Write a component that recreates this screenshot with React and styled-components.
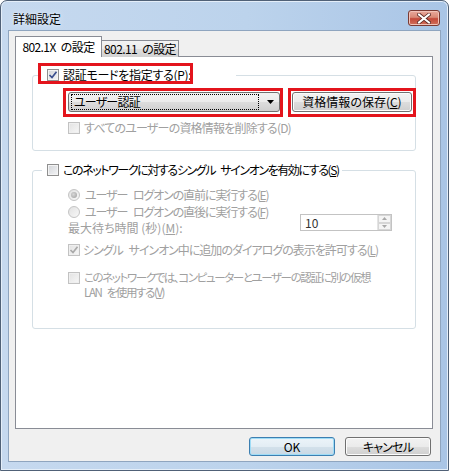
import React from "react";
import styled, { createGlobalStyle } from "styled-components";

const GlobalStyle = createGlobalStyle`
  html, body { margin: 0; padding: 0; background: #fff; }
  body {
    font-family: "Noto Sans CJK JP", "Noto Sans", sans-serif;
    font-size: 12px;
    color: #000;
    font-feature-settings: "palt";
  }
`;

const Window = styled.div`
  width: 449px;
  height: 471px;
  box-sizing: border-box;
  border: 1px solid #506177;
  border-radius: 7px 7px 0 0;
  background: linear-gradient(to right, #c6d9ef 0%, #bcd3ec 55%, #a9c5e6 100%);
  box-shadow: inset 0 0 0 1px #e4eef9;
  display: flex;
  flex-direction: column;
  overflow: hidden;
`;

const TitleBar = styled.div`
  height: 29px;
  display: flex;
  align-items: flex-start;
  padding: 0 8px 0 12px;
`;

const Title = styled.div`
  margin-top: 11px;
  line-height: 14px;
  flex: 1;
  text-shadow: 0 0 6px #e8f1fb, 0 0 2px #e8f1fb;
`;

const CloseButton = styled.div`
  margin-top: 9px;
  width: 32px;
  height: 16px;
  box-sizing: border-box;
  border: 1px solid #7a3a33;
  border-radius: 3px;
  background: linear-gradient(#e9a99c 0%, #d98977 45%, #c4493a 55%, #d0705c 100%);
  box-shadow: inset 0 0 0 1px #f1c2b8;
  display: flex;
  align-items: center;
  justify-content: center;
`;

const Client = styled.div`
  margin-left: 7px;
  width: 433px;
  height: 432px;
  box-sizing: border-box;
  background: #f0f0f0;
  border: 1px solid #8fa5bf;
  padding: 5px 8px 0 6px;
  display: flex;
  flex-direction: column;
`;

const TabStrip = styled.div`
  display: flex;
  align-items: flex-end;
  height: 21px;
  margin-bottom: -1px;
`;

const Tab = styled.div`
  box-sizing: border-box;
  width: ${(p) => p.$width}px;
  height: ${(p) => (p.$active ? 21 : 17)}px;
  padding-top: ${(p) => (p.$active ? 3 : 1)}px;
  line-height: 14px;
  letter-spacing: -0.6px;
  word-spacing: 3px;
  text-align: center;
  white-space: nowrap;
  border: 1px solid #898c95;
  border-bottom: none;
  border-left: ${(p) => (p.$active ? "1px solid #898c95" : "none")};
  background: ${(p) =>
    p.$active ? "#fff" : "linear-gradient(#f3f3f3 0%, #ebebeb 50%, #dedede 51%, #d2d2d2 100%)"};
  position: ${(p) => (p.$active ? "relative" : "static")};
  z-index: ${(p) => (p.$active ? 1 : 0)};
`;

const Panel = styled.div`
  width: 418px;
  height: 373px;
  box-sizing: border-box;
  border: 1px solid #898c95;
  background: #fff;
  padding: 18px 16px 0;
`;

const Group = styled.div`
  width: 384px;
  height: ${(p) => p.$height}px;
  margin-top: ${(p) => p.$top || 0}px;
  box-sizing: border-box;
  border: 1px solid #d5dfe5;
  border-radius: 3px;
  display: flex;
  flex-direction: column;
`;

const Legend = styled.div`
  display: flex;
  align-items: center;
  height: 14px;
  margin: -8px 0 0 ${(p) => p.$left}px;
  padding: 0 3px 0 ${(p) => p.$pad}px;
  width: ${(p) => (p.$width ? `${p.$width}px` : "auto")};
  align-self: flex-start;
  box-sizing: border-box;
  background: #fff;
`;

const Mark = styled.div`
  position: relative;
  display: flex;
  align-items: center;
  &::after {
    content: "";
    position: absolute;
    inset: ${(p) => p.$inset};
    border: 3px solid #e3141c;
    pointer-events: none;
  }
`;

const Row = styled.div`
  display: flex;
  align-items: ${(p) => p.$align || "center"};
  height: ${(p) => (p.$height ? `${p.$height}px` : "auto")};
  margin-top: ${(p) => p.$top || 0}px;
  padding: 0 ${(p) => p.$right || 0}px 0 35px;
  gap: ${(p) => p.$gap || 0}px;
`;

const Label = styled.span`
  color: ${(p) => (p.$disabled ? "#a0a0a0" : "#000")};
  font-size: ${(p) => p.$size || 12}px;
  line-height: ${(p) => p.$lh || 14}px;
  letter-spacing: ${(p) => p.$ls || 0}px;
  word-spacing: ${(p) => (p.$ls ? 4 : 0)}px;
  margin-left: ${(p) => (p.$gap === undefined ? 4 : p.$gap)}px;
  margin-top: ${(p) => p.$top || 0}px;
  white-space: nowrap;
`;

const Line = styled.span`
  display: block;
  height: 15px;
  line-height: 15px;
`;

const Box = styled.span`
  flex: none;
  width: 12px;
  height: 12px;
  box-sizing: border-box;
  margin-top: ${(p) => p.$top || 0}px;
  border: 1px solid ${(p) => (p.$disabled ? "#c2c2c2" : "#8f8f8f")};
  background: ${(p) =>
    p.$disabled
      ? "linear-gradient(135deg, #e2e2e2, #f7f7f7)"
      : "linear-gradient(135deg, #d2d4d8, #f4f5f7)"};
  box-shadow: inset 0 0 0 1px ${(p) => (p.$disabled ? "#efefef" : "#f4f4f4")};
  display: flex;
  align-items: center;
  justify-content: center;
`;

const Radio = styled.span`
  flex: none;
  width: 12px;
  height: 12px;
  box-sizing: border-box;
  border-radius: 50%;
  border: 1px solid #c4c4c4;
  background: linear-gradient(135deg, #e1e1e1, #f8f8f8);
  display: flex;
  align-items: center;
  justify-content: center;
  &::after {
    content: "";
    display: ${(p) => (p.$checked ? "block" : "none")};
    width: 6px;
    height: 6px;
    border-radius: 50%;
    background: radial-gradient(circle at 40% 40%, #d8d8d8, #9c9c9c);
  }
`;

const Dropdown = styled.div`
  width: 212px;
  height: 20px;
  box-sizing: border-box;
  border: 1px solid #707070;
  border-radius: 3px;
  background: linear-gradient(#f2f2f2 0%, #ebebeb 50%, #dddddd 51%, #cfcfcf 100%);
  display: flex;
  align-items: center;
  padding: 1px 5px 1px 2px;
`;

const Focus = styled.div`
  flex: 1;
  height: 14px;
  border: 1px dotted #000;
  line-height: 14px;
  letter-spacing: -0.8px;
  padding-left: 2px;
  margin-right: 8px;
`;

const Button = styled.div`
  width: ${(p) => p.$width}px;
  height: ${(p) => p.$height || 20}px;
  box-sizing: border-box;
  border: 1px solid ${(p) => (p.$default ? "#3c7fb1" : "#707070")};
  border-radius: 3px;
  background: ${(p) =>
    p.$default
      ? "linear-gradient(#ecf4f9 0%, #e3edf4 50%, #d3e1eb 51%, #c9d8e4 100%)"
      : "linear-gradient(#f2f2f2 0%, #ebebeb 50%, #dddddd 51%, #cfcfcf 100%)"};
  box-shadow: inset 0 0 0 1px ${(p) => (p.$default ? "#9fdcf6" : "#fcfcfc")};
  display: flex;
  align-items: center;
  justify-content: center;
  line-height: 14px;
  letter-spacing: ${(p) => p.$ls || 0}px;
`;

const Spin = styled.div`
  margin-left: auto;
  width: 92px;
  height: 17px;
  box-sizing: border-box;
  border: 1px solid #c3c3c3;
  background: #fff;
  display: flex;
  color: #333;
`;

const SpinValue = styled.div`
  flex: 1;
  padding-left: 4px;
  line-height: 15px;
`;

const SpinArrows = styled.div`
  width: 13px;
  display: flex;
  flex-direction: column;
  border-left: 1px solid #e4e4e4;
`;

const SpinHalf = styled.div`
  flex: 1;
  background: #f4f4f4;
  border: 1px solid #d6d6d6;
  display: flex;
  align-items: center;
  justify-content: center;
`;

const Footer = styled.div`
  display: flex;
  justify-content: flex-end;
  gap: 10px;
  margin-top: 8px;
  padding-right: 1px;
`;

const Check = ({ color }) => (
  <svg width="10" height="10" viewBox="0 0 10 10">
    <path d="M1.5 5 L4 7.5 L8.5 1.8" fill="none" stroke={color} strokeWidth="1.7" />
  </svg>
);

const Tri = ({ up, color = "#000", w = 7, h = 4 }) => (
  <svg width={w} height={h} viewBox={`0 0 ${w} ${h}`}>
    <path d={up ? `M0 ${h} L${w / 2} 0 L${w} ${h}Z` : `M0 0 L${w} 0 L${w / 2} ${h}Z`} fill={color} />
  </svg>
);

const CloseIcon = () => (
  <svg width="14" height="11" viewBox="0 0 14 11">
    <path d="M2 1.5 L12 9.5 M12 1.5 L2 9.5" stroke="#5b2a25" strokeWidth="3.6" strokeLinecap="square" />
    <path d="M2 1.5 L12 9.5 M12 1.5 L2 9.5" stroke="#fff" strokeWidth="2" strokeLinecap="square" />
  </svg>
);

export default function App() {
  return (
    <>
      <GlobalStyle />
      <Window>
        <TitleBar>
          <Title>詳細設定</Title>
          <CloseButton>
            <CloseIcon />
          </CloseButton>
        </TitleBar>
        <Client>
          <TabStrip>
            <Tab $active $width={87}>802.1X の設定</Tab>
            <Tab $width={77}>802.11 の設定</Tab>
          </TabStrip>
          <Panel>
            <Group $height={76}>
              <Legend $left={8} $pad={6} $width={195}>
                <Mark $inset="-5px -2px -2px -9px">
                  <Box>
                    <Check color="#3b4f8e" />
                  </Box>
                  <Label $ls={-0.3}>認証モードを指定する(P):</Label>
                </Mark>
              </Legend>
              <Row $top={10} $gap={12}>
                <Mark $inset="-4px -3px -5px -5px">
                  <Dropdown>
                    <Focus>ユーザー認証</Focus>
                    <Tri />
                  </Dropdown>
                </Mark>
                <Mark $inset="-4px -4px -5px -4px">
                  <Button $width={120}>資格情報の保存(<u>C</u>)</Button>
                </Mark>
              </Row>
              <Row $top={9} $height={14}>
                <Box $disabled />
                <Label $disabled $ls={-0.8}>すべてのユーザーの資格情報を削除する(D)</Label>
              </Row>
            </Group>

            <Group $height={159} $top={19}>
              <Legend $left={9} $pad={5}>
                <Box />
                <Label $ls={-1.4}>このネットワークに対するシングル サインオンを有効にする(<u>S</u>)</Label>
              </Legend>
              <Row $top={9} $height={17}>
                <Radio $checked />
                <Label $disabled $gap={5} $ls={-1.1}>ユーザー ログオンの直前に実行する(<u>E</u>)</Label>
              </Row>
              <Row $height={17}>
                <Radio />
                <Label $disabled $gap={5} $ls={-1.1}>ユーザー ログオンの直後に実行する(<u>F</u>)</Label>
              </Row>
              <Row $top={-6} $height={23} $align="flex-start" $right={23}>
                <Label $disabled $gap={0} $top={7}>最大待ち時間 (秒)(<u>M</u>):</Label>
                <Spin>
                  <SpinValue>10</SpinValue>
                  <SpinArrows>
                    <SpinHalf><Tri up color="#a8a8a8" w={5} h={3} /></SpinHalf>
                    <SpinHalf><Tri color="#a8a8a8" w={5} h={3} /></SpinHalf>
                  </SpinArrows>
                </Spin>
              </Row>
              <Row $top={4} $height={17}>
                <Box $disabled>
                  <Check color="#a9a9a9" />
                </Box>
                <Label $disabled $gap={3} $ls={-1}>シングル サインオン中に追加のダイアログの表示を許可する(<u>L</u>)</Label>
              </Row>
              <Row $top={12} $align="flex-start">
                <Box $disabled $top={2} />
                <Label $disabled $size={11.5} $ls={-1.4}>
                  <Line>このネットワークでは、コンピューターとユーザーの認証に別の仮想</Line>
                  <Line>LAN を使用する(<u>V</u>)</Line>
                </Label>
              </Row>
            </Group>
          </Panel>
          <Footer>
            <Button $default $width={86} $height={19}>OK</Button>
            <Button $width={86} $height={19} $ls={-0.8}>キャンセル</Button>
          </Footer>
        </Client>
      </Window>
    </>
  );
}
